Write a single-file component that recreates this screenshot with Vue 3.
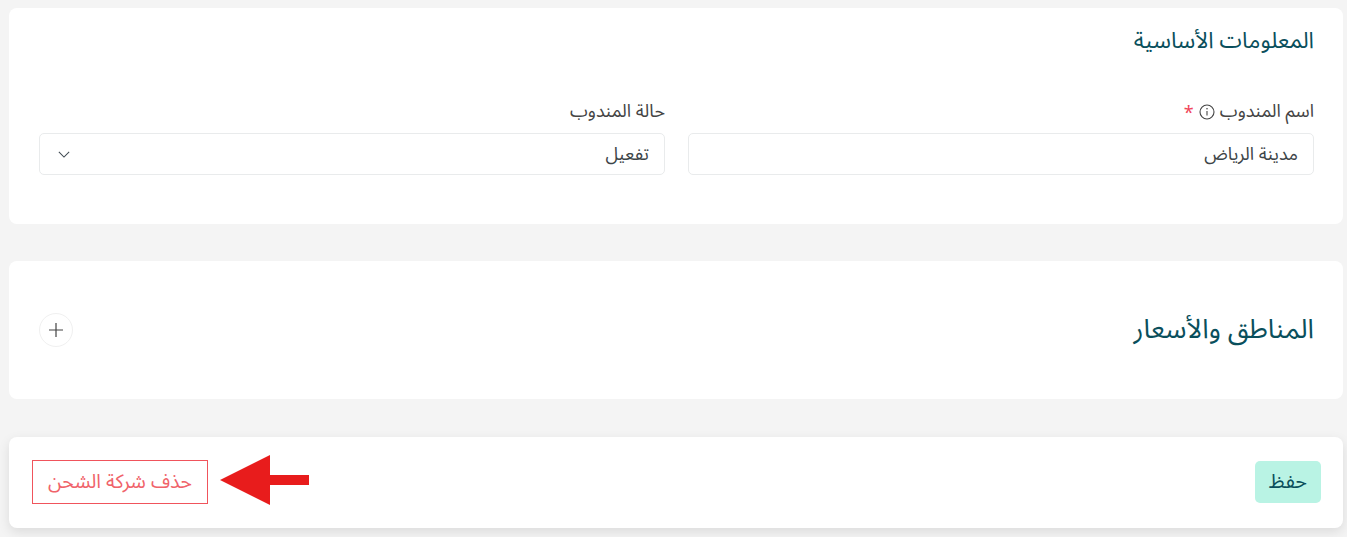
<template>
  <div class="page" dir="rtl">
    <section class="card card-basic">
      <h2 class="card-title">المعلومات الأساسية</h2>
      <div class="fields">
        <div class="field">
          <label class="field-label">
            اسم المندوب
            <svg class="info" viewBox="0 0 16 16" width="16" height="16">
              <circle cx="8" cy="8" r="7" fill="none" stroke="#444" stroke-width="1.1" />
              <path d="M8 7v4.6" stroke="#444" stroke-width="1.1" fill="none" />
              <circle cx="8" cy="4.8" r="0.8" fill="#444" />
            </svg>
            <span class="req">*</span>
          </label>
          <div class="control">مدينة الرياض</div>
        </div>
        <div class="field">
          <label class="field-label">حالة المندوب</label>
          <div class="control control-select">
            <span>تفعيل</span>
            <svg viewBox="0 0 14 8" width="12" height="7">
              <path d="M1 1l6 6 6-6" fill="none" stroke="#3f4a52" stroke-width="1.2" />
            </svg>
          </div>
        </div>
      </div>
    </section>

    <section class="card card-zones">
      <h2 class="zones-title">المناطق والأسعار</h2>
      <button class="add-btn" type="button" aria-label="إضافة">
        <svg viewBox="0 0 14 14" width="14" height="14">
          <path d="M7 0v14M0 7h14" stroke="#444" stroke-width="1.2" fill="none" />
        </svg>
      </button>
    </section>

    <footer class="card card-actions">
      <button class="save-btn" type="button">حفظ</button>
      <button class="delete-btn" type="button">حذف شركة الشحن</button>
      <!-- annotation arrow on top of the screenshot -->
      <svg class="arrow" viewBox="0 0 89 50" width="89" height="50">
        <path d="M0 25 50 0V20H89V30H50V50Z" fill="#e81c1c" />
      </svg>
    </footer>
  </div>
</template>

<script setup>
</script>

<style>
html,
body {
  margin: 0;
  background: #f4f4f4;
}
</style>

<style scoped>
.page {
  box-sizing: border-box;
  height: 537px;
  padding: 8px 4px 0 4px;
  overflow: hidden;
  background: #f4f4f4;
  font-family: "Noto Sans Arabic", "Noto Sans", "DejaVu Sans", sans-serif;
  color: #3d4548;
}

.card {
  box-sizing: border-box;
  width: 1334px;
  background: #fff;
  border-radius: 8px;
}

.card-basic {
  height: 216px;
  padding: 18px 29px 0 30px;
}

.card-title {
  margin: 0;
  font-size: 22.6px;
  line-height: 30px;
  font-weight: 400;
  color: #0a4f5c;
}

.fields {
  display: grid;
  grid-template-columns: 1fr 1fr;
  gap: 23px;
  margin-top: 43px;
}

.field-label {
  display: flex;
  align-items: center;
  gap: 5px;
  height: 24px;
  margin-bottom: 10px;
  font-size: 18px;
  color: #444;
}

.info {
  margin-top: 1px;
}

.req {
  color: #f0455a;
  margin-top: 3px;
}

.control {
  box-sizing: border-box;
  display: flex;
  align-items: center;
  height: 42px;
  padding: 0 15px;
  border: 1px solid #e9ebec;
  border-radius: 5px;
  font-size: 18px;
  color: #3d4548;
}

.control-select {
  justify-content: space-between;
  padding-left: 18px;
}

.card-zones {
  display: flex;
  align-items: center;
  justify-content: space-between;
  height: 138px;
  margin-top: 37px;
  padding: 0 29px 1px 30px;
}

.zones-title {
  margin: 0;
  font-size: 27px;
  font-weight: 400;
  color: #0a4f5c;
}

.add-btn {
  display: flex;
  align-items: center;
  justify-content: center;
  width: 34px;
  height: 34px;
  padding: 0;
  background: #fff;
  border: 1px solid #f0f0f0;
  border-radius: 50%;
}

.card-actions {
  position: relative;
  display: flex;
  align-items: center;
  justify-content: space-between;
  height: 91px;
  margin-top: 38px;
  padding: 0 22px 2px 23px;
  box-shadow: 0 4px 12px rgba(0, 0, 0, 0.1);
}

.save-btn {
  width: 66px;
  height: 42px;
  padding: 0;
  background: #b9f3e4;
  border: 0;
  border-radius: 5px;
  font-family: inherit;
  font-size: 20px;
  color: #0a4f5c;
}

.delete-btn {
  width: 176px;
  height: 44px;
  padding: 0;
  background: #fff;
  border: 1px solid #f0545c;
  font-family: inherit;
  font-size: 19.5px;
  color: #f0636a;
}

.arrow {
  position: absolute;
  left: 211px;
  top: 18px;
}
</style>
